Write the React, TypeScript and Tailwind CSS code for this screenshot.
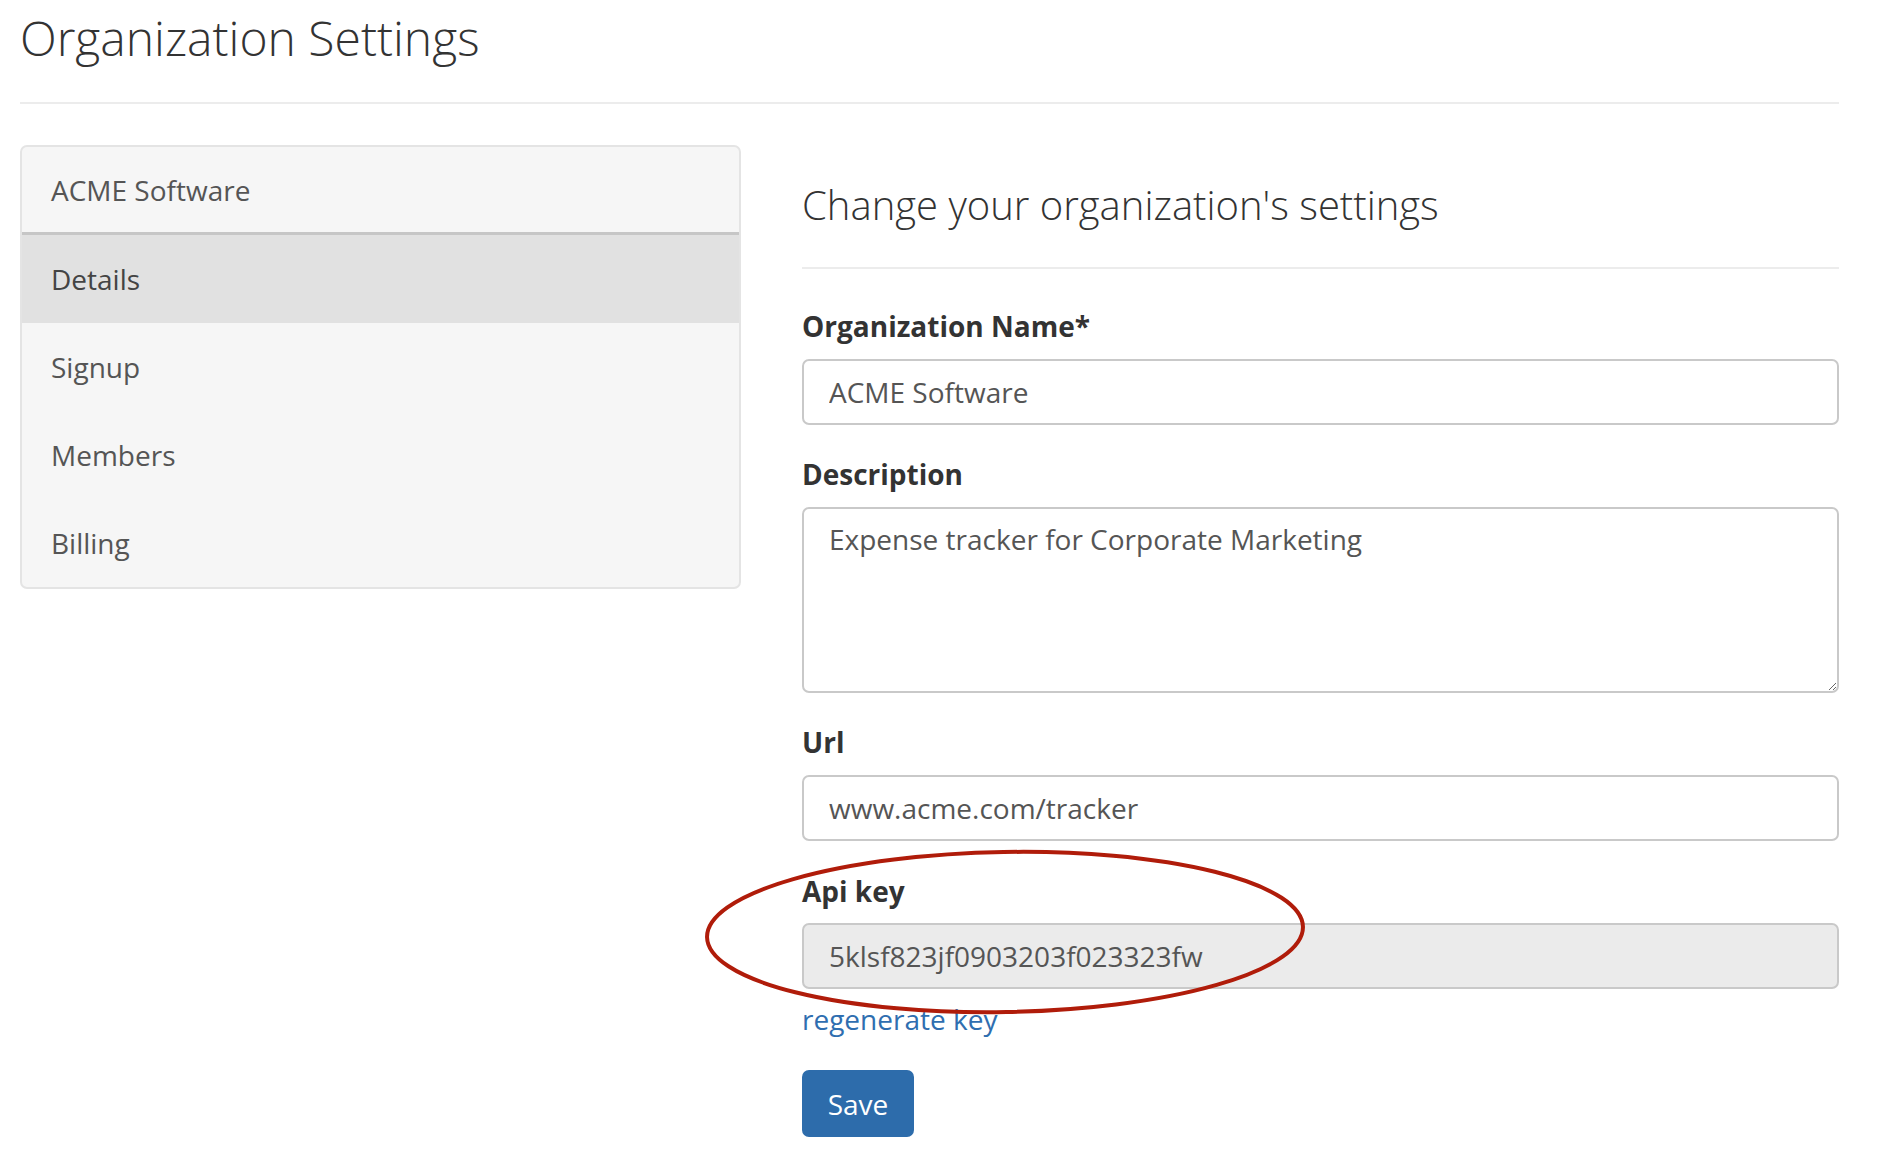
import React from 'react';

const menu = ['Details', 'Signup', 'Members', 'Billing'];

function Field({ label, children }: { label: string; children: React.ReactNode }) {
    return (
        <div className="mt-[35px]">
            <label className="block text-[28px] leading-[28px] font-bold text-[#333]">{label}</label>
            <div className="mt-[19px]">{children}</div>
        </div>
    );
}

const inputCls =
    'block w-full h-[66px] rounded-[7px] border-2 border-[#c9c9c9] px-[25px] text-[28px] leading-[28px] text-[#555] outline-none';

export default function App() {
    return (
        <div className="relative min-h-[1166px] bg-white pl-[20px] pr-[63px] font-['Open_Sans',sans-serif]">
            <h1 className="pt-[14px] text-[48px] leading-[48px] font-light text-[#333]">Organization Settings</h1>
            <div className="mt-[40px] border-t-2 border-[#ececec]" />

            <div className="mt-[41px] flex gap-[61px]">
                {/* sidebar */}
                <div className="w-[721px] shrink-0 self-start overflow-hidden rounded-[7px] border-2 border-[#e4e4e4] bg-[#f6f6f6]">
                    <div className="flex h-[88px] items-center border-b-[3px] border-[#c6c6c6] px-[29px] text-[28px] leading-[28px] text-[#555]">
                        ACME Software
                    </div>
                    {menu.map((item) => (
                        <div
                            key={item}
                            className={
                                item === 'Details'
                                    ? 'flex h-[88px] items-center bg-[#e1e1e1] px-[29px] text-[28px] leading-[28px] text-[#444]'
                                    : 'flex h-[88px] items-center px-[29px] text-[28px] leading-[28px] text-[#555]'
                            }
                        >
                            {item}
                        </div>
                    ))}
                </div>

                {/* form */}
                <div className="flex flex-1 flex-col pt-[40px]">
                    <h2 className="text-[40px] leading-[40px] font-light text-[#333]">Change your organization's settings</h2>
                    <div className="mt-[42px] border-t-2 border-[#ececec]" />

                    <div className="flex flex-col pt-[8px]">
                        <Field label="Organization Name*">
                            <input className={inputCls} defaultValue="ACME Software" readOnly />
                        </Field>
                        <Field label="Description">
                            <textarea
                                className="block h-[186px] w-full rounded-[7px] border-2 border-[#c9c9c9] px-[25px] pt-[16px] text-[28px] leading-[28px] text-[#555] outline-none"
                                defaultValue="Expense tracker for Corporate Marketing"
                                readOnly
                            />
                        </Field>
                        <Field label="Url">
                            <input className={inputCls} defaultValue="www.acme.com/tracker" readOnly />
                        </Field>
                        <div className="mt-[36px]">
                            <label className="block text-[28px] leading-[28px] font-bold text-[#333]">Api key</label>
                            <input
                                className="mt-[18px] block h-[66px] w-full rounded-[7px] border-2 border-[#c9c9c9] bg-[#ebebeb] px-[25px] text-[28px] leading-[28px] text-[#555] outline-none"
                                defaultValue="5klsf823jf0903203f023323fw"
                                readOnly
                            />
                        </div>
                        <a href="#" className="mt-[16px] block w-fit text-[28px] leading-[28px] text-[#2f6eb0]">
                            regenerate key
                        </a>
                        <button className="mt-[37px] flex h-[67px] w-[112px] items-center justify-center rounded-[7px] bg-[#2d6cab] text-[28px] leading-[28px] text-white">
                            Save
                        </button>
                    </div>
                </div>
            </div>

            {/* red annotation ring */}
            <svg
                className="pointer-events-none absolute left-[700px] top-[846px] -rotate-1"
                width="612"
                height="172"
                viewBox="0 0 612 172"
            >
                <ellipse cx="305" cy="86" rx="298" ry="80" fill="none" stroke="#b01c0a" strokeWidth="4" />
            </svg>
        </div>
    );
}
